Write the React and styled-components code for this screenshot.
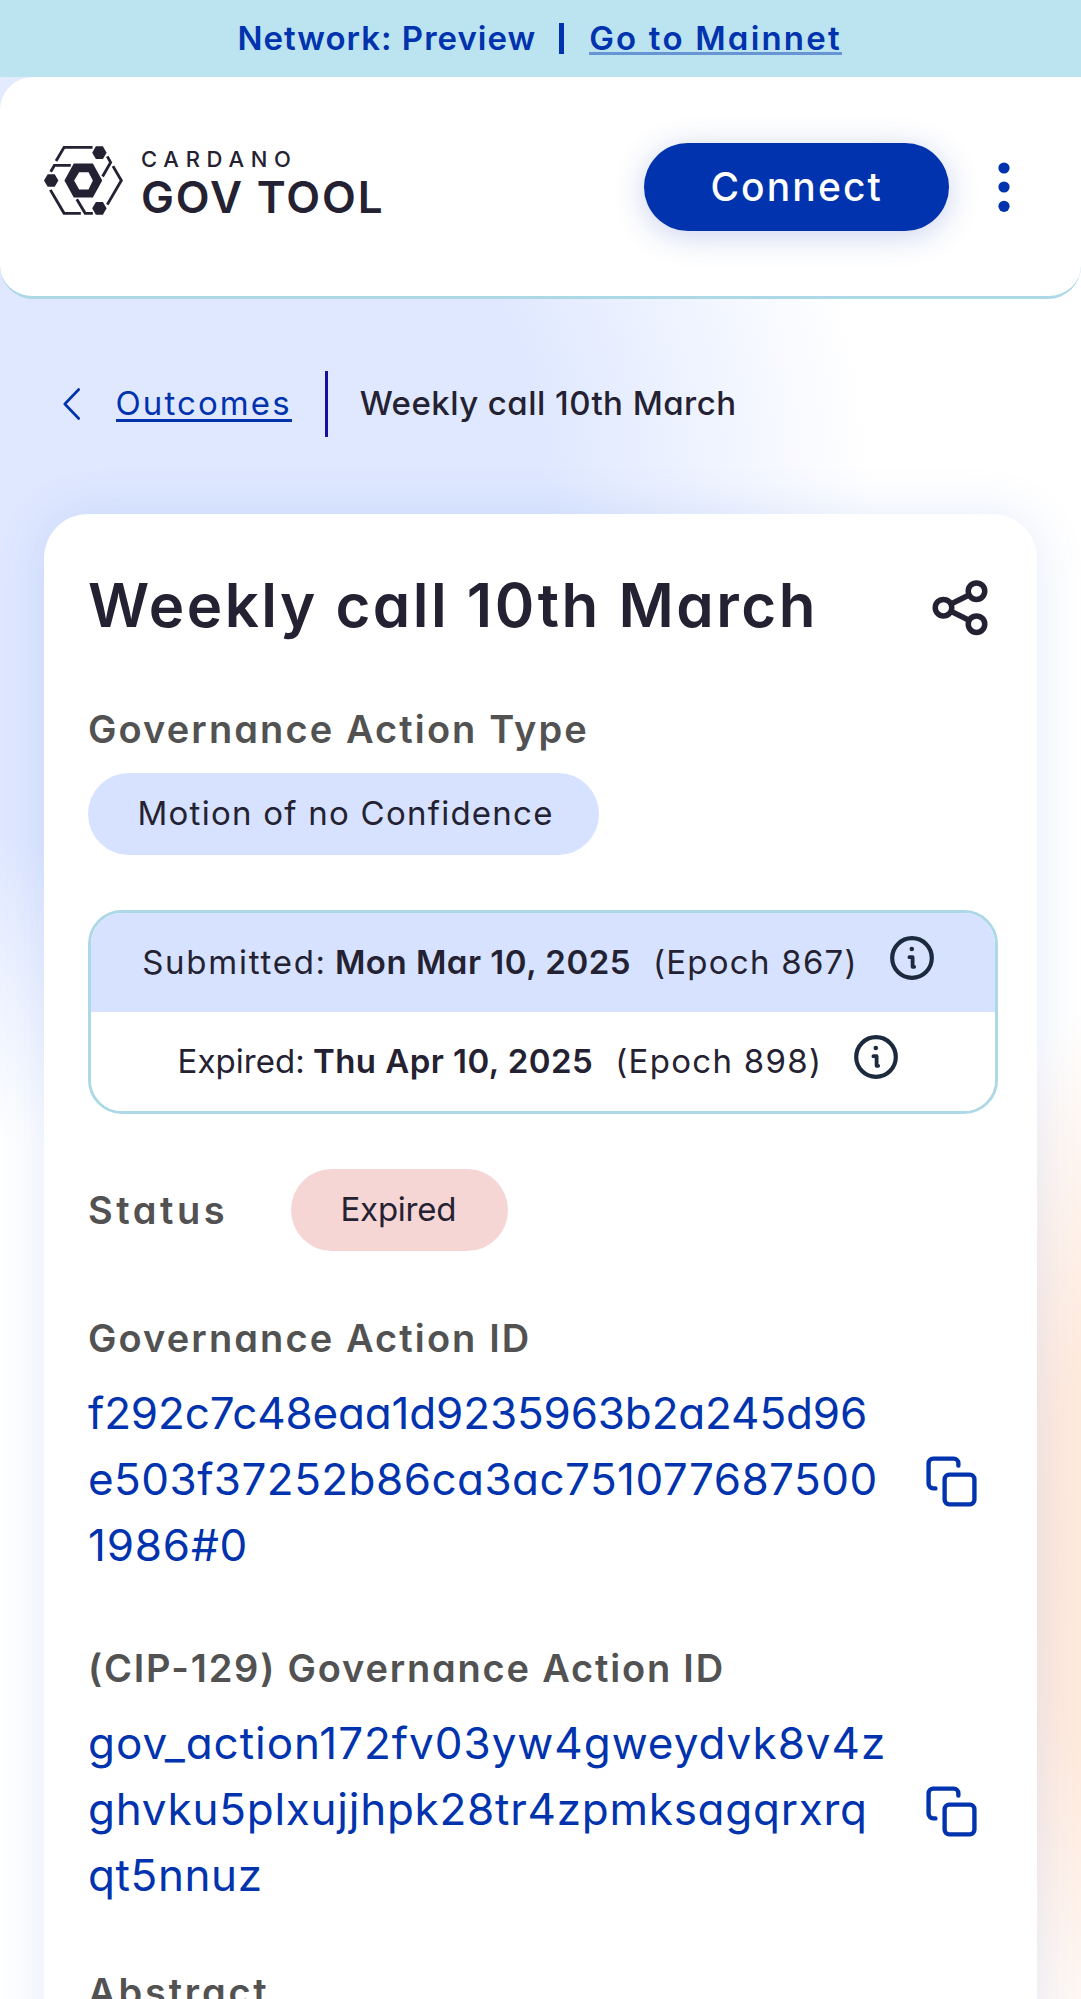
import React from "react";
import styled, { createGlobalStyle } from "styled-components";

const INK = "#242232";
const BLUE = "#0033ad";
const MUTED = "#525252";
const SKY = "#add8e6";

const GlobalStyle = createGlobalStyle`
  *, *::before, *::after { box-sizing: border-box; }
  body { margin: 0; background: #fff; }
`;

const Page = styled.div`
  display: flex;
  flex-direction: column;
  height: 1999px;
  overflow: hidden;
  font-family: Inter, "Open Sans", sans-serif;
  font-feature-settings: "cv11";
  font-size: 33px;
  color: ${INK};
  background:
    radial-gradient(ellipse 740px 670px at 130px 480px, #dfe8ff 0, #dfe8ff 56%, rgba(223, 232, 255, 0.5) 78%, rgba(223, 232, 255, 0) 100%),
    radial-gradient(ellipse 400px 600px at 1240px 1560px, #ffe8da 0, #ffeadd 50%, rgba(255, 234, 221, 0) 100%),
    #fff;
`;

const Text = styled.span`
  white-space: nowrap;
  font-weight: ${(p) => p.$weight || 400};
  letter-spacing: ${(p) => p.$track || 0}px;
`;

const Banner = styled.div`
  flex: none;
  display: flex;
  align-items: center;
  height: 77px;
  padding: 0 0 2px 237.5px;
  background: #bce3f0;
  color: ${BLUE};
`;

const Pipe = styled.span`
  width: 5px;
  height: 31px;
  margin: 2px 25px 0 23px;
  background: ${BLUE};
`;

const BannerLink = styled.a`
  position: relative;
  display: flex;
  line-height: 40px;
  &::after {
    content: "";
    position: absolute;
    left: 0;
    right: 0;
    bottom: 2.5px;
    height: 3px;
    background: rgba(0, 51, 173, 0.45);
  }
`;

const Header = styled.header`
  flex: none;
  display: flex;
  align-items: flex-start;
  justify-content: space-between;
  height: 222px;
  padding: 66px 44px 0;
  background: #fff;
  border-bottom: 3px solid ${SKY};
  border-radius: 33px;
`;

const Logo = styled.div`
  display: flex;
  margin-top: 3px;
  gap: 18px;
`;

const Wordmark = styled.div`
  display: flex;
  flex-direction: column;
  gap: 5px;
  padding-top: 2px;
`;

const BrandTop = styled(Text)`
  font-size: 22px;
  line-height: 22px;
`;

const BrandMain = styled(Text)`
  font-size: 44px;
  line-height: 44px;
`;

const Actions = styled.div`
  display: flex;
  align-items: center;
  gap: 21.6px;
`;

const ConnectButton = styled.button`
  width: 305.5px;
  height: 88px;
  padding: 0 0 2px;
  border: 0;
  border-radius: 44px;
  background: ${BLUE};
  color: #fff;
  font: inherit;
  font-feature-settings: inherit;
  font-size: 39px;
  box-shadow: 0 5px 30px rgba(47, 78, 190, 0.25);
`;

const Breadcrumb = styled.nav`
  flex: none;
  display: flex;
  align-items: center;
  height: 66px;
  margin: 72px 0 77px 63px;
`;

const OutcomesLink = styled.a`
  display: flex;
  align-items: center;
  height: 36px;
  margin: 0 33px 1px 35.5px;
  padding-top: 2px;
  color: ${BLUE};
  line-height: 37px;
  border-bottom: 3px solid ${BLUE};
`;

const Divider = styled.span`
  width: 3px;
  height: 66px;
  margin-right: 32px;
  background: #1a0f9c;
`;

const Crumb = styled(Text)`
  margin-bottom: 2px;
`;

const Card = styled.main`
  flex: none;
  height: 1700px;
  margin: 0 44px;
  padding: 44px;
  border-radius: 44px;
  background: #fff;
  box-shadow: 0 0 50px rgba(47, 98, 220, 0.13);
`;

const TitleRow = styled.div`
  display: flex;
  align-items: center;
  justify-content: space-between;
  height: 96px;
`;

const Title = styled.h1`
  margin: 0 0 2px;
  font-size: 60px;
  font-weight: 600;
  letter-spacing: 2.5px;
  white-space: nowrap;
`;

const Label = styled.div`
  margin-top: ${(p) => p.$top || 0}px;
  font-size: 38px;
  line-height: 58px;
  font-weight: 600;
  letter-spacing: ${(p) => p.$track}px;
  color: ${MUTED};
  white-space: nowrap;
`;

const Chip = styled.div`
  display: flex;
  align-items: center;
  width: fit-content;
  height: 82.5px;
  padding: 0 ${(p) => p.$right}px 2px 49.5px;
  border-radius: 42px;
  background: ${(p) => p.$bg};
`;

const TypeChip = styled(Chip)`
  margin-top: 14.5px;
`;

const Dates = styled.div`
  width: 910px;
  margin-top: 55px;
  border: 3px solid ${SKY};
  border-radius: 34px;
  overflow: hidden;
`;

const DateRow = styled.div`
  display: flex;
  align-items: center;
  justify-content: center;
  gap: 8px;
  height: 99px;
  padding-bottom: 2px;
  background: ${(p) => (p.$tinted ? "#d6e2ff" : "#fff")};
`;

const Epoch = styled(Text)`
  margin-left: 14px;
`;

const InfoSvg = styled.svg`
  flex: none;
  margin: 0 10px 7px 24px;
`;

const StatusRow = styled.div`
  display: flex;
  align-items: center;
  gap: 63px;
  margin-top: 54.5px;
`;

const IdRow = styled.div`
  display: flex;
  align-items: center;
  justify-content: space-between;
  margin-top: 13px;
  padding-right: 14px;
  color: ${BLUE};
`;

const IdLines = styled.div`
  display: flex;
  flex-direction: column;
  font-size: 44px;
  line-height: 66px;
`;

const CopySvg = styled.svg`
  flex: none;
  margin-top: 5px;
`;

function LogoMark() {
  return (
    <svg width="79" height="69" viewBox="42 47 236 206" fill={INK}>
      <path
        fillRule="evenodd"
        d="M103 150 131 99H188L216 150 188 201H131ZM132 150 147 177H175L188 150 175 125H147Z"
      />
      <path d="M42 150 53 131H74L85 150 74 169H53Z" />
      <path d="M186 67 197 48H218L229 67 218 86H197Z" />
      <path d="M186 233 197 214H218L229 233 218 252H197Z" />
      <g fill="none" stroke={INK} strokeWidth="8.5">
        <path d="M78 92 102 51H187" />
        <path d="M62 124 73 105H122" />
        <path d="M231 78 241 96 217 138" />
        <path d="M248 107 273 150 231 222" />
        <path d="M61 178 102 248H152" />
        <path d="M140 206 165 248H188" />
      </g>
    </svg>
  );
}

function DotsIcon() {
  return (
    <svg width="66" height="66" viewBox="0 0 66 66" fill={BLUE}>
      <circle cx="33" cy="14" r="5.6" />
      <circle cx="33" cy="33" r="5.6" />
      <circle cx="33" cy="52.3" r="5.6" />
    </svg>
  );
}

function ChevronIcon() {
  return (
    <svg width="17" height="32" viewBox="0 0 17 32" fill="none" stroke={BLUE} strokeWidth="2.6">
      <path d="M15.7 1.5 1.8 16 15.7 30.5" strokeLinecap="round" strokeLinejoin="round" />
    </svg>
  );
}

function ShareIcon() {
  return (
    <svg width="66" height="66" viewBox="0 -0.6 24 24" fill="none" stroke={INK} strokeWidth="2">
      <circle cx="6" cy="12" r="3" />
      <circle cx="18" cy="6" r="3" />
      <circle cx="18" cy="18" r="3" />
      <path d="M8.7 10.7 15.3 7.4M8.7 13.3l6.6 3.3" />
    </svg>
  );
}

function InfoIcon() {
  return (
    <InfoSvg width="44" height="44" viewBox="0 0 44 44" fill="none" stroke="#1c2a3e">
      <circle cx="22" cy="22" r="19.8" strokeWidth="4.2" />
      <circle cx="21.8" cy="13" r="2.3" fill="#1c2a3e" stroke="none" />
      <path d="M19.4 21.2H22.6V30.8H24.2" strokeWidth="3.8" strokeLinecap="round" strokeLinejoin="round" />
    </InfoSvg>
  );
}

function CopyIcon() {
  return (
    <CopySvg
      width="55"
      height="55"
      viewBox="0 0 24 24"
      fill="none"
      stroke={BLUE}
      strokeWidth="1.9"
      strokeLinecap="round"
      strokeLinejoin="round"
    >
      <rect x="9" y="9" width="13" height="13" rx="2" />
      <path d="M5 15H4a2 2 0 0 1-2-2V4a2 2 0 0 1 2-2h9a2 2 0 0 1 2 2v1" />
    </CopySvg>
  );
}

function IdBlock({ lines }) {
  return (
    <IdRow>
      <IdLines>
        {lines.map(([text, track]) => (
          <Text key={text} $track={track}>
            {text}
          </Text>
        ))}
      </IdLines>
      <CopyIcon />
    </IdRow>
  );
}

const ACTION_ID = [
  ["f292c7c48eaa1d9235963b2a245d96", -0.15],
  ["e503f37252b86ca3ac751077687500", 0.45],
  ["1986#0", 0.8],
];

const CIP_ID = [
  ["gov_action172fv03yw4gweydvk8v4z", 0.97],
  ["ghvku5plxujjhpk28tr4zpmksagqrxrq", 0.75],
  ["qt5nnuz", 0.6],
];

export default function App() {
  return (
    <Page>
      <GlobalStyle />
      <Banner>
        <Text $weight={600} $track={1.0}>Network: Preview</Text>
        <Pipe />
        <BannerLink>
          <Text $weight={600} $track={2.2}>Go to Mainnet</Text>
        </BannerLink>
      </Banner>
      <Header>
        <Logo>
          <LogoMark />
          <Wordmark>
            <BrandTop $weight={500} $track={6.7}>CARDANO</BrandTop>
            <BrandMain $weight={600} $track={1.9}>GOV TOOL</BrandMain>
          </Wordmark>
        </Logo>
        <Actions>
          <ConnectButton>
            <Text $weight={500} $track={2.1}>Connect</Text>
          </ConnectButton>
          <DotsIcon />
        </Actions>
      </Header>
      <Breadcrumb>
        <ChevronIcon />
        <OutcomesLink>
          <Text $track={2.1}>Outcomes</Text>
        </OutcomesLink>
        <Divider />
        <Crumb $weight={500} $track={0.45}>Weekly call 10th March</Crumb>
      </Breadcrumb>
      <Card>
        <TitleRow>
          <Title>Weekly call 10th March</Title>
          <ShareIcon />
        </TitleRow>
        <Label $top={46} $track={2.1}>Governance Action Type</Label>
        <TypeChip $bg="#d6e2ff" $right={45}>
          <Text $track={1.25}>Motion of no Confidence</Text>
        </TypeChip>
        <Dates>
          <DateRow $tinted>
            <Text $track={1.75}>Submitted:</Text>
            <Text $weight={600} $track={0.5}>Mon Mar 10, 2025</Text>
            <Epoch $track={1.25}>(Epoch 867)</Epoch>
            <InfoIcon />
          </DateRow>
          <DateRow>
            <Text $track={0.05}>Expired:</Text>
            <Text $weight={600} $track={0.45}>Thu Apr 10, 2025</Text>
            <Epoch $track={1.3}>(Epoch 898)</Epoch>
            <InfoIcon />
          </DateRow>
        </Dates>
        <StatusRow>
          <Label $track={3.5}>Status</Label>
          <Chip $bg="#f6d5d5" $right={52}>
            <Text $track={-0.25}>Expired</Text>
          </Chip>
        </StatusRow>
        <Label $top={58} $track={2.1}>Governance Action ID</Label>
        <IdBlock lines={ACTION_ID} />
        <Label $top={61} $track={1.8}>(CIP-129) Governance Action ID</Label>
        <IdBlock lines={CIP_ID} />
        <Label $top={55} $track={2.8}>Abstract</Label>
      </Card>
    </Page>
  );
}
